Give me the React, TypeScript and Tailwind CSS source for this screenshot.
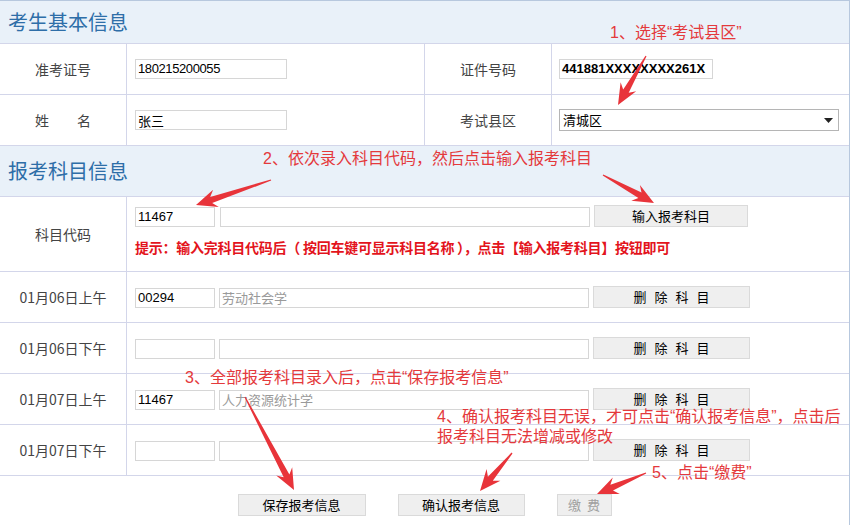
import React from 'react'

const cn = '"Noto Sans CJK SC", "Liberation Sans", sans-serif'
const num = '"Liberation Sans", "Noto Sans CJK SC", sans-serif'

type Arrow = { x1: number; y1: number; x2: number; y2: number }

const arrows: Arrow[] = [
  { x1: 646, y1: 56, x2: 618, y2: 105 },
  { x1: 271, y1: 180, x2: 196, y2: 205 },
  { x1: 603, y1: 175, x2: 654, y2: 203 },
  { x1: 245, y1: 397, x2: 294, y2: 490 },
  { x1: 512, y1: 453, x2: 480, y2: 491 },
  { x1: 646, y1: 473, x2: 597, y2: 494 }
]

function arrowPoints({ x1, y1, x2, y2 }: Arrow) {
  const dx = x2 - x1
  const dy = y2 - y1
  const len = Math.hypot(dx, dy)
  const ux = dx / len
  const uy = dy / len
  const nx = -uy
  const ny = ux
  const head = 18
  const bx = x2 - ux * head
  const by = y2 - uy * head
  const pt = (x: number, y: number) => `${x.toFixed(1)},${y.toFixed(1)}`
  return [
    pt(x1 + nx * 0.6, y1 + ny * 0.6),
    pt(bx + ux * 2 + nx * 3.2, by + uy * 2 + ny * 3.2),
    pt(bx - ux * 3 + nx * 9, by - uy * 3 + ny * 9),
    pt(x2, y2),
    pt(bx - ux * 3 - nx * 9, by - uy * 3 - ny * 9),
    pt(bx + ux * 2 - nx * 3.2, by + uy * 2 - ny * 3.2),
    pt(x1 - nx * 0.6, y1 - ny * 0.6)
  ].join(' ')
}

function Field({ w, children, className = 'items-center text-black' }: { w: string; children?: React.ReactNode; className?: string }) {
  return (
    <div
      className={`${w} h-[20px] border border-[#d6d6d6] bg-white flex px-[2px] text-[13px] overflow-hidden whitespace-nowrap ${className}`}
      style={{ fontFamily: num }}
    >
      {children}
    </div>
  )
}

function Btn({ w, children, muted = false }: { w: string; children: React.ReactNode; muted?: boolean }) {
  return (
    <div
      className={`${w} h-[22px] border border-[#dadada] bg-[#efefef] flex items-center justify-center text-[13px] ${muted ? 'text-[#a0a0a0]' : 'text-black'}`}
      style={{ fontFamily: cn }}
    >
      {children}
    </div>
  )
}

function Header({ title, h }: { title: string; h: string }) {
  return (
    <div className={`${h} bg-[#e9f1f9] border-b border-[#d3d6ea] flex items-center pl-[8px]`}>
      <span className="text-[20px] text-[#2e6ea8] leading-none" style={{ fontFamily: cn }}>
        {title}
      </span>
    </div>
  )
}

function Label({ children }: { children: React.ReactNode }) {
  return (
    <div
      className="w-[127px] shrink-0 border-r border-[#d3d6ea] flex items-center justify-center text-[14px] text-[#444]"
      style={{ fontFamily: cn }}
    >
      {children}
    </div>
  )
}

function SubjectRow({ label, code, name }: { label: string; code?: string; name?: string }) {
  return (
    <div className="h-[51px] border-b border-[#d3d6ea] flex">
      <Label>{label}</Label>
      <div className="flex-1 flex items-center pl-[8px]">
        <div className="flex items-end">
          <Field w="w-[80px]">{code}</Field>
          <Field w="w-[370px] ml-[4px]" className="items-start text-[#9a9a9a]">
            <span className="text-[13px] leading-[17px]" style={{ fontFamily: cn }}>{name}</span>
          </Field>
          <div className="ml-[4px]">
            <Btn w="w-[157px]">
              <span className="tracking-[8px] pl-[8px]">删除科目</span>
            </Btn>
          </div>
        </div>
      </div>
    </div>
  )
}

export default function App() {
  return (
    <div className="relative w-[856px] h-[525px] bg-white overflow-hidden">
      <div className="w-[850px] border-t border-r border-[#b7c8de]">
        <Header title="考生基本信息" h="h-[43px]" />
        <div className="h-[51px] border-b border-[#d3d6ea] flex">
          <Label>准考证号</Label>
          <div className="w-[298px] shrink-0 border-r border-[#d3d6ea] flex items-center pl-[8px]">
            <Field w="w-[152px]" className="items-center text-black text-[12px] tracking-[-0.4px]">180215200055</Field>
          </div>
          <Label>证件号码</Label>
          <div className="flex-1 flex items-center pl-[7px]">
            <Field w="w-[154px]" className="items-center text-black text-[12px] font-bold">441881XXXXXXXX261X</Field>
          </div>
        </div>
        <div className="h-[51px] border-b border-[#d3d6ea] flex">
          <Label>
            <span>姓</span>
            <span className="ml-[28px]">名</span>
          </Label>
          <div className="w-[298px] shrink-0 border-r border-[#d3d6ea] flex items-center pl-[8px]">
            <Field w="w-[152px]" className="items-end text-black">
              <span className="text-[13px] leading-[16px]" style={{ fontFamily: cn }}>张三</span>
            </Field>
          </div>
          <Label>考试县区</Label>
          <div className="flex-1 flex items-center pl-[7px]">
            <div
              className="w-[280px] h-[22px] border border-[#b5b5b5] bg-white flex items-center justify-between pl-[3px] pr-[5px] text-[13px] text-black"
              style={{ fontFamily: cn }}
            >
              <span>清城区</span>
              <svg width="9" height="5" viewBox="0 0 9 5">
                <path d="M0 0h9L4.5 5z" fill="#222" />
              </svg>
            </div>
          </div>
        </div>
        <Header title="报考科目信息" h="h-[51px]" />
        <div className="h-[75px] border-b border-[#d3d6ea] flex">
          <Label>科目代码</Label>
          <div className="flex-1 pl-[8px] pt-[8px]">
            <div className="flex items-end">
              <Field w="w-[80px]">11467</Field>
              <Field w="w-[370px] ml-[5px]" />
              <div className="ml-[4px]">
                <Btn w="w-[154px]">输入报考科目</Btn>
              </div>
            </div>
            <div className="mt-[11px] text-[14px] font-bold text-[#e3141c] leading-[18px] tracking-[-0.25px] whitespace-nowrap" style={{ fontFamily: cn }}>
              提示：输入完科目代码后（ 按回车键可显示科目名称 ），点击【输入报考科目】按钮即可
            </div>
          </div>
        </div>
        <SubjectRow label="01月06日上午" code="00294" name="劳动社会学" />
        <SubjectRow label="01月06日下午" />
        <SubjectRow label="01月07日上午" code="11467" name="人力资源统计学" />
        <SubjectRow label="01月07日下午" />
        <div className="h-[50px] flex justify-center items-start pt-[18px] gap-[32px]">
          <Btn w="w-[128px]">保存报考信息</Btn>
          <Btn w="w-[127px]">确认报考信息</Btn>
          <Btn w="w-[55px]" muted>
            <span className="tracking-[6px] pl-[6px]">缴费</span>
          </Btn>
        </div>
      </div>

      {/* annotation overlay */}
      <div className="absolute inset-0 pointer-events-none text-[16px] text-[#e4393c] leading-[20px]" style={{ fontFamily: num }}>
        <div className="absolute left-[610px] top-[23px] whitespace-nowrap">1、选择“考试县区”</div>
        <div className="absolute left-[263px] top-[149px] whitespace-nowrap">2、依次录入科目代码，然后点击输入报考科目</div>
        <div className="absolute left-[185px] top-[368px] whitespace-nowrap">3、全部报考科目录入后，点击“保存报考信息”</div>
        <div className="absolute left-[437px] top-[407px] whitespace-nowrap">
          4、确认报考科目无误，才可点击“确认报考信息”，点击后
          <br />
          报考科目无法增减或修改
        </div>
        <div className="absolute left-[652px] top-[463px] whitespace-nowrap">5、点击“缴费”</div>
        <svg className="absolute inset-0" width="856" height="525" viewBox="0 0 856 525">
          {arrows.map((a, i) => (
            <polygon key={i} points={arrowPoints(a)} fill="#e8343a" />
          ))}
        </svg>
      </div>
    </div>
  )
}
